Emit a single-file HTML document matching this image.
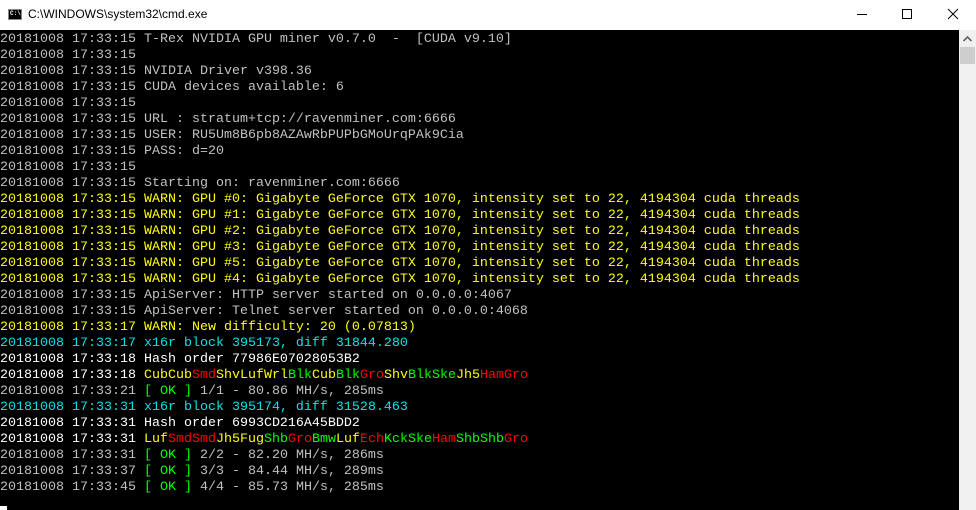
<!DOCTYPE html>
<html><head><meta charset="utf-8"><style>
html,body{margin:0;padding:0;width:976px;height:510px;overflow:hidden;background:#000}
#title{position:absolute;left:0;top:0;width:976px;height:30px;background:#fff}
#title .t{position:absolute;left:28px;top:7px;font:12px "Liberation Sans",sans-serif;color:#000}
#icon{position:absolute;left:8px;top:9px;width:14px;height:11px;background:#000;border:1px solid #888;box-sizing:border-box}
#icon span{position:absolute;left:1px;top:0px;font:bold 6px "Liberation Mono",monospace;color:#fff;line-height:7px}
#con{position:absolute;left:0;top:32px;width:959px;height:478px;background:#000;overflow:hidden}
pre{margin:0;font:13.33px/16px "Liberation Mono",monospace;color:#c0c0c0;white-space:pre}
.w{color:#fff}.y{color:#ffff00}.c{color:#00e5e5}.g{color:#00ff00}.r{color:#ff0000}.gr{color:#c0c0c0}
#sb{position:absolute;left:959px;top:30px;width:17px;height:480px;background:#f0f0f0}
#thumb{position:absolute;left:1px;top:17px;width:15px;height:17px;background:#cdcdcd}
#cur{position:absolute;left:0;top:506px;width:7px;height:4px;background:#fff}
</style></head><body>
<div id="title"><div id="icon"><span>C:\</span></div><div class="t">C:\WINDOWS\system32\cmd.exe</div>
<svg style="position:absolute;left:850px;top:6px" width="120" height="18">
<line x1="7" y1="8.5" x2="17" y2="8.5" stroke="#000" stroke-width="1"/>
<rect x="52.5" y="3.5" width="9" height="9" fill="none" stroke="#000" stroke-width="1"/>
<line x1="98" y1="3" x2="108" y2="13" stroke="#000" stroke-width="1"/>
<line x1="108" y1="3" x2="98" y2="13" stroke="#000" stroke-width="1"/>
</svg></div>
<div id="con"><pre>20181008 17:33:15 T-Rex NVIDIA GPU miner v0.7.0  -  [CUDA v9.10]
20181008 17:33:15
20181008 17:33:15 NVIDIA Driver v398.36
20181008 17:33:15 CUDA devices available: 6
20181008 17:33:15
20181008 17:33:15 URL : stratum+tcp://ravenminer.com:6666
20181008 17:33:15 USER: RU5Um8B6pb8AZAwRbPUPbGMoUrqPAk9Cia
20181008 17:33:15 PASS: d=20
20181008 17:33:15
20181008 17:33:15 Starting on: ravenminer.com:6666
<span class="y">20181008 17:33:15 WARN: GPU #0: Gigabyte GeForce GTX 1070, intensity set to 22, 4194304 cuda threads
20181008 17:33:15 WARN: GPU #1: Gigabyte GeForce GTX 1070, intensity set to 22, 4194304 cuda threads
20181008 17:33:15 WARN: GPU #2: Gigabyte GeForce GTX 1070, intensity set to 22, 4194304 cuda threads
20181008 17:33:15 WARN: GPU #3: Gigabyte GeForce GTX 1070, intensity set to 22, 4194304 cuda threads
20181008 17:33:15 WARN: GPU #5: Gigabyte GeForce GTX 1070, intensity set to 22, 4194304 cuda threads
20181008 17:33:15 WARN: GPU #4: Gigabyte GeForce GTX 1070, intensity set to 22, 4194304 cuda threads</span>
20181008 17:33:15 ApiServer: HTTP server started on 0.0.0.0:4067
20181008 17:33:15 ApiServer: Telnet server started on 0.0.0.0:4068
<span class="y">20181008 17:33:17 WARN: New difficulty: 20 (0.07813)</span>
<span class="c">20181008 17:33:17 x16r block 395173, diff 31844.280</span>
<span class="w">20181008 17:33:18 Hash order 77986E07028053B2</span>
<span class="w">20181008 17:33:18 </span><span class="y">CubCub</span><span class="r">Smd</span><span class="y">ShvLufWrl</span><span class="g">Blk</span><span class="y">Cub</span><span class="g">Blk</span><span class="r">Gro</span><span class="y">Shv</span><span class="g">BlkSke</span><span class="y">Jh5</span><span class="r">HamGro</span>
20181008 17:33:21 <span class="g">[ OK ]</span> 1/1 - 80.86 MH/s, 285ms
<span class="c">20181008 17:33:31 x16r block 395174, diff 31528.463</span>
<span class="w">20181008 17:33:31 Hash order 6993CD216A45BDD2</span>
<span class="w">20181008 17:33:31 </span><span class="y">Luf</span><span class="r">SmdSmd</span><span class="y">Jh5Fug</span><span class="g">Shb</span><span class="r">Gro</span><span class="g">Bmw</span><span class="y">Luf</span><span class="r">Ech</span><span class="g">KckSke</span><span class="r">Ham</span><span class="g">ShbShb</span><span class="r">Gro</span>
20181008 17:33:31 <span class="g">[ OK ]</span> 2/2 - 82.20 MH/s, 286ms
20181008 17:33:37 <span class="g">[ OK ]</span> 3/3 - 84.44 MH/s, 289ms
20181008 17:33:45 <span class="g">[ OK ]</span> 4/4 - 85.73 MH/s, 285ms</pre></div>
<div id="cur"></div>
<div id="sb"><svg style="position:absolute;left:4px;top:6px" width="9" height="6"><path d="M0.5 5 L4.5 1 L8.5 5" fill="none" stroke="#606060" stroke-width="1.6"/></svg><div id="thumb"></div></div>
</body></html>
